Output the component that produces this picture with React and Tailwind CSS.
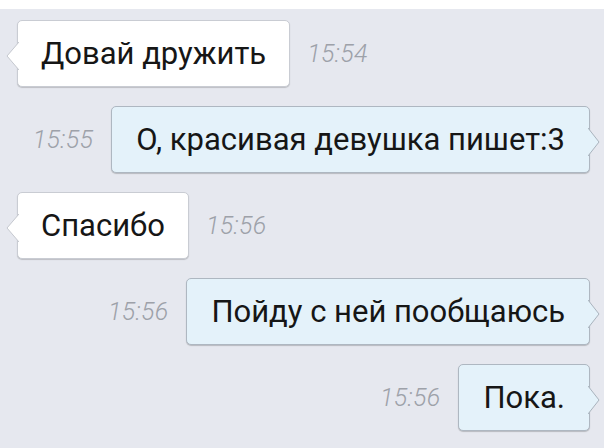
import React from "react";

const font = { fontFamily: "Roboto, 'Noto Sans', Arial, sans-serif" };

function TailLeft() {
  return (
    <svg
      className="absolute left-[-12px] top-[21px]"
      width="13"
      height="28"
      viewBox="0 0 13 28"
    >
      <polygon points="13,0 1,14 13,28" fill="#ffffff" />
      <polyline points="13,0 1,14 13,28" fill="none" stroke="#c4c7ce" strokeWidth="1" />
    </svg>
  );
}

function TailRight() {
  return (
    <svg
      className="absolute right-[-11px] top-[21px]"
      width="12"
      height="28"
      viewBox="0 0 12 28"
    >
      <polygon points="0,0 11,14 0,28" fill="#e4f2fa" />
      <polyline points="0,0 11,14 0,28" fill="none" stroke="#a9b3bd" strokeWidth="1" />
    </svg>
  );
}

function Time({ t }) {
  return (
    <span className="text-[25px] italic font-light text-[#9da1a9] leading-none tracking-[0.3px]">
      {t}
    </span>
  );
}

function In({ text, time }) {
  return (
    <div className="flex items-center gap-[17px] pl-[17px]">
      <div className="relative h-[67px] flex items-center px-[23px] bg-white border border-[#c9ccd3] rounded-[5px] shadow-[0_1px_1px_rgba(0,0,0,0.18)]">
        <TailLeft />
        <span className="text-[31px] leading-none text-[#161616] whitespace-nowrap">{text}</span>
      </div>
      <Time t={time} />
    </div>
  );
}

function Out({ text, time }) {
  return (
    <div className="flex items-center justify-end gap-[18px] pr-[14px]">
      <Time t={time} />
      <div className="relative h-[67px] flex items-center px-[24px] bg-[#e4f2fa] border border-[#aeb7c1] rounded-[5px] shadow-[0_1px_1px_rgba(0,0,0,0.2)]">
        <TailRight />
        <span className="text-[31px] leading-none text-[#161616] whitespace-nowrap">{text}</span>
      </div>
    </div>
  );
}

export default function App() {
  return (
    <div className="w-[604px] h-[448px] overflow-hidden bg-white" style={font}>
      <div className="h-[9px] bg-white" />
      <div className="h-[439px] bg-[#e6e8ef] pt-[11px] flex flex-col gap-[19px]">
        <In text="Довай дружить" time="15:54" />
        <Out text="О, красивая девушка пишет:3" time="15:55" />
        <In text="Спасибо" time="15:56" />
        <Out text="Пойду с ней пообщаюсь" time="15:56" />
        <Out text="Пока." time="15:56" />
      </div>
    </div>
  );
}
